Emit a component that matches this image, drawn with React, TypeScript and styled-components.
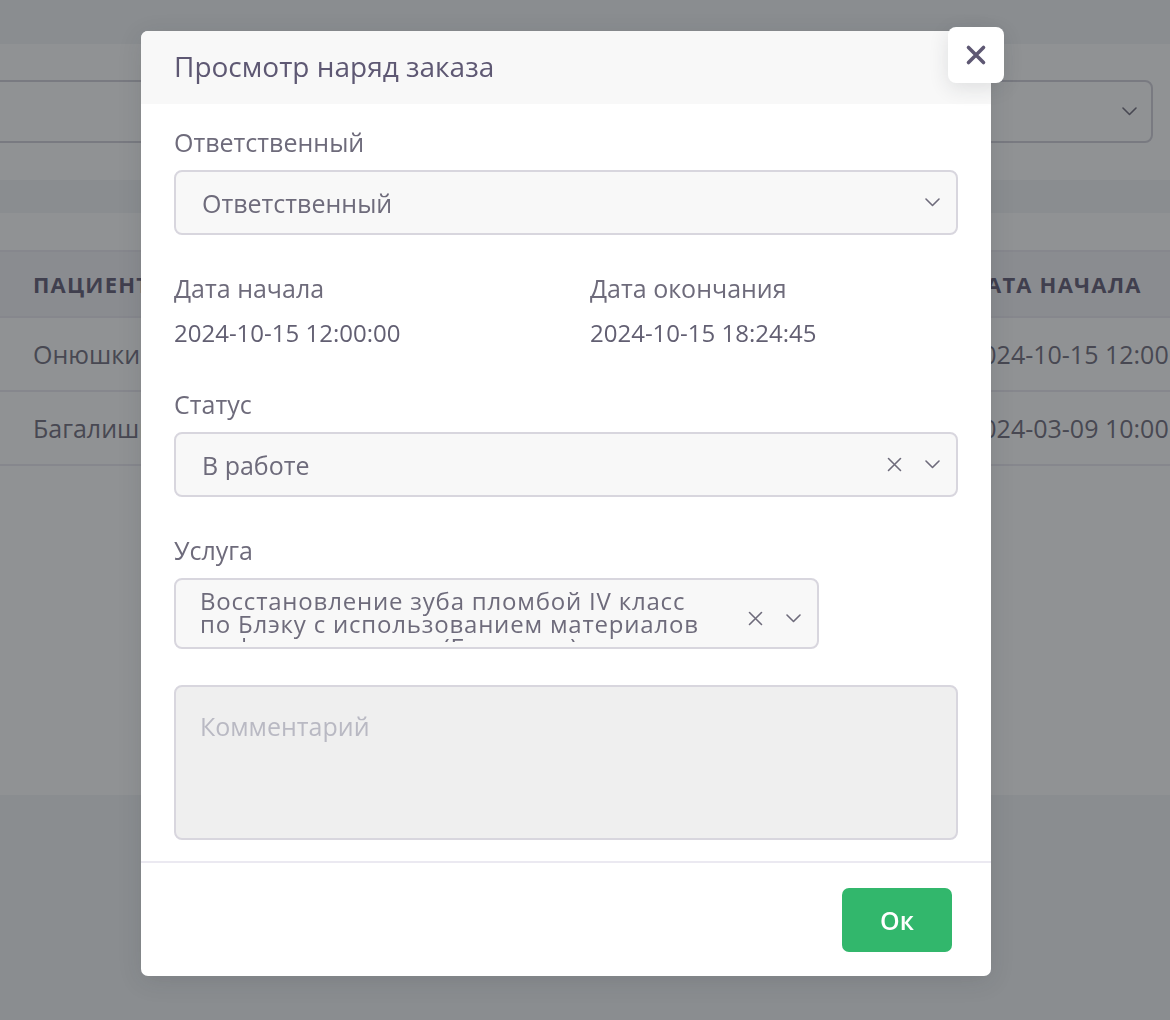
import React from "react";
import styled, { createGlobalStyle } from "styled-components";

const GlobalStyle = createGlobalStyle`
  html, body {
    margin: 0;
    padding: 0;
  }
  body {
    font-family: "Open Sans", "Noto Sans", sans-serif;
    background: #f3f5f7;
    color: #6e6b7b;
  }
  * { box-sizing: border-box; }
`;

// ---------- page underneath the modal ----------

const Page = styled.div`
  width: 1170px;
  height: 1020px;
  overflow: hidden;
  background: #f3f5f7;
  padding-top: 44px;
`;

const Card = styled.div<{ height: number }>`
  background: #ffffff;
  height: ${({ height }) => height}px;
  margin-bottom: 33px;
`;

const FilterRow = styled.div`
  display: grid;
  grid-template-columns: 360px 1fr 360px;
  gap: 24px;
  padding: 36px 17px 0 0;
  margin-left: -20px;
`;

const FakeSelect = styled.div`
  height: 63px;
  border: 2px solid #d0cfd8;
  border-radius: 8px;
  display: flex;
  align-items: center;
  justify-content: flex-end;
  padding-right: 14px;
`;

const TableWrap = styled.div`
  padding-top: 37px;
`;

const TableRow = styled.div<{ head?: boolean }>`
  display: grid;
  grid-template-columns: 935px 1fr;
  padding-left: 33px;
  height: ${({ head }) => (head ? 68 : 74)}px;
  align-items: center;
  white-space: nowrap;
  background: ${({ head }) => (head ? "#f3f2f7" : "#ffffff")};
  border-top: ${({ head }) => (head ? "2px solid #ebe9f1" : "none")};
  border-bottom: 2px solid #ebe9f1;
  color: ${({ head }) => (head ? "#5e5873" : "#6e6b7b")};
  font-size: ${({ head }) => (head ? 22 : 25)}px;
  font-weight: ${({ head }) => (head ? 700 : 400)};
  letter-spacing: ${({ head }) => (head ? "1.2px" : "0")};
  text-transform: ${({ head }) => (head ? "uppercase" : "none")};
`;

// ---------- modal ----------

const Overlay = styled.div`
  position: fixed;
  inset: 0;
  background: rgba(33, 37, 41, 0.5);
  padding: 31px 0 0 141px;
`;

const Dialog = styled.div`
  position: relative;
  width: 850px;
  background: #ffffff;
  border-radius: 7px;
  box-shadow: 0 5px 25px rgba(34, 41, 47, 0.12);
`;

const Header = styled.div`
  height: 73px;
  background: #f8f8f8;
  border-radius: 7px 7px 0 0;
  display: flex;
  align-items: center;
  padding: 0 33px 4px;
`;

const Title = styled.h5`
  margin: 0;
  font-size: 28px;
  line-height: 34px;
  font-weight: 500;
  color: #5e5873;
`;

const CloseButton = styled.button`
  position: absolute;
  top: -4px;
  right: -13px;
  width: 56px;
  height: 56px;
  border: none;
  border-radius: 8px;
  background: #ffffff;
  box-shadow: 0 5px 20px rgba(34, 41, 47, 0.12);
  display: flex;
  align-items: center;
  justify-content: center;
  padding: 0;
`;

const Body = styled.div`
  padding: 23px 33px 21px;
`;

const Group = styled.div<{ gap?: number }>`
  margin-bottom: ${({ gap }) => gap ?? 38}px;
`;

const Label = styled.div`
  font-size: 25px;
  line-height: 30px;
  color: #6e6b7b;
  margin-bottom: 13px;
`;

const DateGrid = styled.div`
  display: grid;
  grid-template-columns: 1fr 1fr;
  gap: 48px;
  margin-bottom: 41px;
`;

const DateLabel = styled(Label)`
  margin-bottom: 15px;
`;

const Value = styled.div`
  font-size: 24px;
  line-height: 30px;
  color: #625f72;
`;

const Select = styled.div<{ width?: number; tall?: boolean }>`
  width: ${({ width }) => (width ? `${width}px` : "100%")};
  height: ${({ tall }) => (tall ? 71 : 65)}px;
  background: #f8f8f8;
  border: 2px solid #d8d6de;
  border-radius: 8px;
  display: flex;
  align-items: ${({ tall }) => (tall ? "flex-start" : "center")};
  padding: ${({ tall }) => (tall ? "9px 16px 0 24px" : "0 16px 0 26px")};
  color: #6e6b7b;
`;

const SelectValue = styled.div<{ multi?: boolean }>`
  flex: 1;
  font-size: ${({ multi }) => (multi ? 24 : 25)}px;
  letter-spacing: ${({ multi }) => (multi ? "0.8px" : "0")};
  line-height: ${({ multi }) => (multi ? "23px" : "30px")};
  height: ${({ multi }) => (multi ? "53px" : "auto")};
  overflow: hidden;
  padding-right: ${({ multi }) => (multi ? 36 : 20)}px;
`;

const Indicators = styled.div`
  display: flex;
  align-items: center;
  gap: 23px;
  align-self: center;
`;

const TextArea = styled.div`
  height: 155px;
  background: #efefef;
  border: 2px solid #d8d6de;
  border-radius: 8px;
  padding: 24px 24px;
  font-size: 25px;
  line-height: 30px;
  color: #b9b9c3;
`;

const Footer = styled.div`
  border-top: 2px solid #ebe9f1;
  display: flex;
  justify-content: flex-end;
  padding: 25px 39px 24px;
`;

const OkButton = styled.button`
  width: 110px;
  height: 64px;
  border: none;
  border-radius: 7px;
  background: #32b76c;
  color: #ffffff;
  font-family: inherit;
  font-size: 25px;
  font-weight: 600;
`;

const Chevron = () => (
  <svg width="15" height="9" viewBox="0 0 15 9" fill="none">
    <polyline points="1,1 7.5,7.5 14,1" stroke="#6e6b7b" strokeWidth="1.6" strokeLinecap="round" strokeLinejoin="round" />
  </svg>
);

const Clear = () => (
  <svg width="15" height="15" viewBox="0 0 15 15" fill="none">
    <path d="M1.5 1.5 L13.5 13.5 M13.5 1.5 L1.5 13.5" stroke="#6e6b7b" strokeWidth="1.6" strokeLinecap="round" />
  </svg>
);

const CloseIcon = () => (
  <svg width="22" height="22" viewBox="0 0 22 22" fill="none">
    <path d="M3.5 3.5 L18.5 18.5 M18.5 3.5 L3.5 18.5" stroke="#5e5873" strokeWidth="3.6" strokeLinecap="round" />
  </svg>
);

export default function App() {
  return (
    <>
      <GlobalStyle />
      <Page>
        <Card height={136}>
          <FilterRow>
            <FakeSelect />
            <FakeSelect />
            <FakeSelect>
              <Chevron />
            </FakeSelect>
          </FilterRow>
        </Card>
        <Card height={582}>
          <TableWrap>
            <TableRow head>
              <span>Пациент</span>
              <span>Дата начала</span>
            </TableRow>
            <TableRow>
              <span>Онюшкина Мария</span>
              <span>2024-10-15 12:00:00</span>
            </TableRow>
            <TableRow>
              <span>Багалишвили Нино</span>
              <span>2024-03-09 10:00:00</span>
            </TableRow>
          </TableWrap>
        </Card>
      </Page>

      <Overlay>
        <Dialog>
          <Header>
            <Title>Просмотр наряд заказа</Title>
          </Header>
          <CloseButton aria-label="Закрыть">
            <CloseIcon />
          </CloseButton>
          <Body>
            <Group>
              <Label>Ответственный</Label>
              <Select>
                <SelectValue>Ответственный</SelectValue>
                <Indicators>
                  <Chevron />
                </Indicators>
              </Select>
            </Group>

            <DateGrid>
              <div>
                <DateLabel>Дата начала</DateLabel>
                <Value>2024-10-15 12:00:00</Value>
              </div>
              <div>
                <DateLabel>Дата окончания</DateLabel>
                <Value>2024-10-15 18:24:45</Value>
              </div>
            </DateGrid>

            <Group>
              <Label>Статус</Label>
              <Select>
                <SelectValue>В работе</SelectValue>
                <Indicators>
                  <Clear />
                  <Chevron />
                </Indicators>
              </Select>
            </Group>

            <Group gap={36}>
              <Label>Услуга</Label>
              <Select width={645} tall>
                <SelectValue multi>
                  Восстановление зуба пломбой IV класс по Блэку с использованием материалов из фотополимеров (Брилиант)
                </SelectValue>
                <Indicators>
                  <Clear />
                  <Chevron />
                </Indicators>
              </Select>
            </Group>

            <TextArea>Комментарий</TextArea>
          </Body>
          <Footer>
            <OkButton>Ок</OkButton>
          </Footer>
        </Dialog>
      </Overlay>
    </>
  );
}
